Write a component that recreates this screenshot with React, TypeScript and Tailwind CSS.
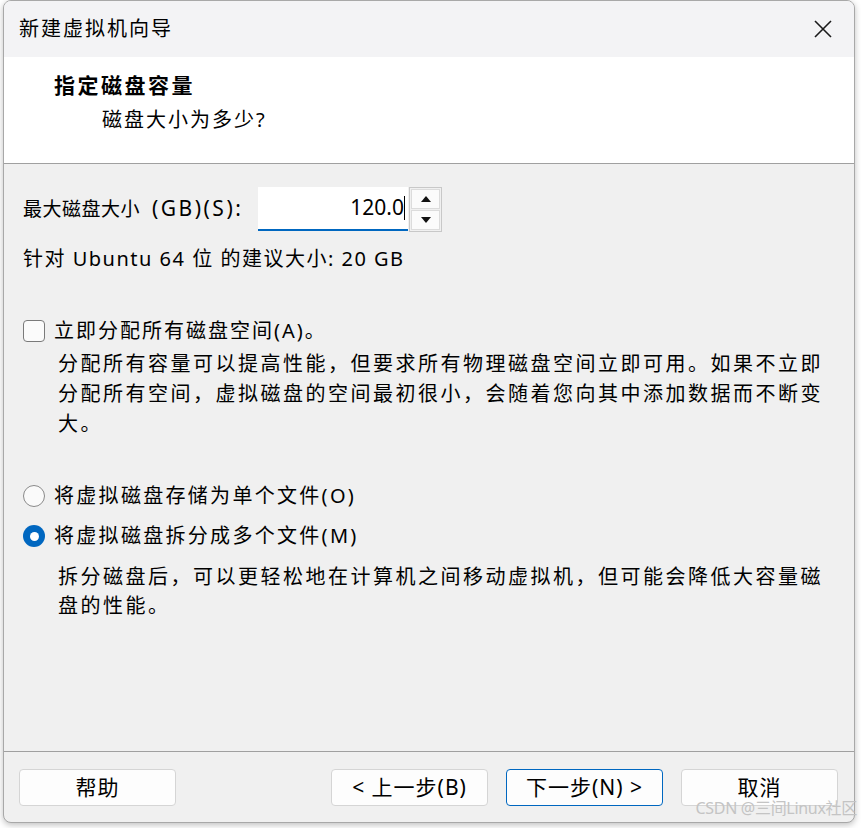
import React from "react";

const font = {
  fontFamily: '"Noto Sans", "Noto Sans CJK SC", sans-serif',
};

const Radio = ({ checked }: { checked?: boolean }) =>
  checked ? (
    <span className="flex h-[22px] w-[22px] shrink-0 items-center justify-center rounded-full bg-[#0067c0]">
      <span className="h-[9px] w-[9px] rounded-full bg-white" />
    </span>
  ) : (
    <span className="h-[22px] w-[22px] shrink-0 rounded-full border-[1.5px] border-[#8a8a8a] bg-[#fafafa]" />
  );

const Button = ({
  children,
  primary,
  className = "",
}: {
  children: React.ReactNode;
  primary?: boolean;
  className?: string;
}) => (
  <button
    className={`flex h-[37px] w-[157px] items-center justify-center rounded-[4px] border bg-[#fdfdfd] text-[21px] tracking-[1px] text-black ${
      primary ? "border-[#0067c0]" : "border-[#d5d5d5]"
    } ${className}`}
  >
    {children}
  </button>
);

export default function App() {
  return (
    <div className="relative h-[828px] w-[861px] overflow-hidden bg-white" style={font}>
      <div className="ml-[3px] flex h-[823px] w-[852px] flex-col overflow-hidden rounded-[8px] border border-[#a8a8a8] bg-[#f0f0f0] shadow-[0_2px_6px_rgba(0,0,0,0.25)]">
        {/* title bar */}
        <div className="flex h-[56px] shrink-0 items-center justify-between bg-[#f3f3f5] pl-[15px] pr-[20px]">
          <span className="text-[20px] tracking-[2px] text-black">新建虚拟机向导</span>
          <svg width="20" height="20" viewBox="0 0 20 20" className="mr-[1px]">
            <path d="M2 2 L18 18 M18 2 L2 18" stroke="#1a1a1a" strokeWidth="1.6" />
          </svg>
        </div>

        {/* header */}
        <div className="flex h-[107px] shrink-0 flex-col border-b border-[#a0a0a0] bg-white pl-[50px] pt-[12px]">
          <span className="text-[21px] font-bold leading-[32px] tracking-[2.5px] text-black">指定磁盘容量</span>
          <span className="ml-[48px] mt-[3px] text-[20px] leading-[32px] tracking-[2px] text-black">磁盘大小为多少?</span>
        </div>

        {/* body */}
        <div className="flex flex-1 flex-col pl-[19px] pt-[23px] text-[20px] text-black">
          <div className="flex h-[44px] items-center">
            <span className="flex w-[235px] items-baseline whitespace-nowrap">
              <span className="mr-[12px] text-[19px] tracking-[0.5px]">最大磁盘大小</span>
              <span className="text-[21px] tracking-[2.5px]">(GB)(S):</span>
            </span>
            <div className="flex h-[44px] w-[150px] items-center justify-end border-b-2 border-[#0067c0] bg-white pr-[3px]">
              <span className="text-[21px]">120.0</span>
              <span className="h-[24px] w-[1px] bg-black" />
            </div>
            <div className="ml-[1px] flex h-[45px] w-[33px] flex-col gap-[1px] border border-[#c8c8c8] bg-[#f0f0f0] p-[1px]">
              <div className="flex flex-1 items-center justify-center border border-[#dcdcdc] bg-[#fbfbfb]">
                <svg width="10" height="6" viewBox="0 0 10 6"><path d="M5 0 L10 6 L0 6 Z" fill="#111" /></svg>
              </div>
              <div className="flex flex-1 items-center justify-center border border-[#dcdcdc] bg-[#fbfbfb]">
                <svg width="10" height="6" viewBox="0 0 10 6"><path d="M0 0 L10 0 L5 6 Z" fill="#111" /></svg>
              </div>
            </div>
          </div>

          <div className="mt-[13px] leading-[30px] tracking-[1.5px]">针对 Ubuntu 64 位 的建议大小: 20 GB</div>

          <div className="mt-[42px] flex h-[30px] items-center gap-[9px]">
            <span className="h-[22px] w-[22px] shrink-0 rounded-[4px] border-[1.5px] border-[#7a7a7a] bg-[#fbfbfb]" />
            <span className="tracking-[2px]">立即分配所有磁盘空间(A)。</span>
          </div>
          <p className="ml-[35px] mt-[3px] leading-[30px] tracking-[2.5px]">
            分配所有容量可以提高性能，但要求所有物理磁盘空间立即可用。如果不立即
            <br />
            分配所有空间，虚拟磁盘的空间最初很小，会随着您向其中添加数据而不断变
            <br />
            大。
          </p>

          <div className="mt-[42px] flex h-[30px] items-center gap-[9px]">
            <Radio />
            <span className="tracking-[2.3px]">将虚拟磁盘存储为单个文件(O)</span>
          </div>
          <div className="mt-[10px] flex h-[30px] items-center gap-[9px]">
            <Radio checked />
            <span className="tracking-[2.3px]">将虚拟磁盘拆分成多个文件(M)</span>
          </div>
          <p className="ml-[35px] mt-[11px] leading-[29px] tracking-[2.5px]">
            拆分磁盘后，可以更轻松地在计算机之间移动虚拟机，但可能会降低大容量磁
            <br />
            盘的性能。
          </p>
        </div>

        {/* footer */}
        <div className="flex h-[71px] shrink-0 items-start border-t border-[#a0a0a0] pl-[15px] pr-[16px] pt-[17px]">
          <Button>帮助</Button>
          <div className="ml-auto flex gap-[18px]">
            <Button>&lt; 上一步(B)</Button>
            <Button primary>下一步(N) &gt;</Button>
            <Button>取消</Button>
          </div>
        </div>
      </div>

      <span className="absolute bottom-[8px] right-[4px] text-[16px] tracking-[-0.3px] text-[#c4c4c4]">
        CSDN @三间Linux社区
      </span>
    </div>
  );
}
